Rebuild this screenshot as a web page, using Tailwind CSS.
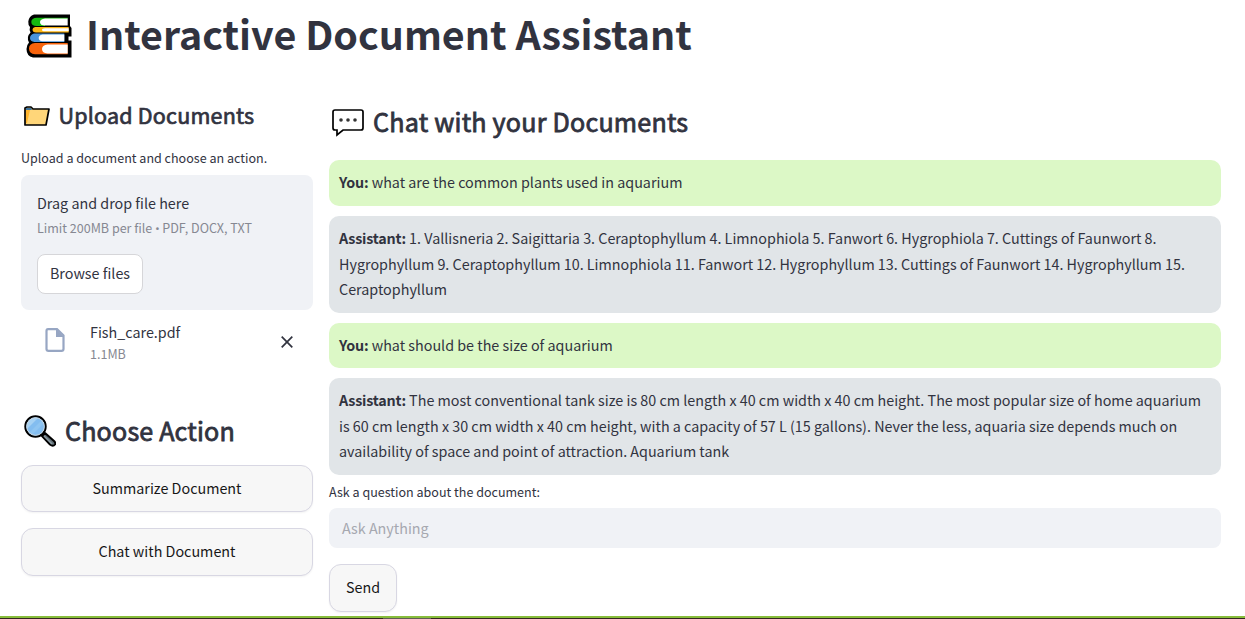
<!DOCTYPE html>
<html lang="en">
<head>
<meta charset="utf-8">
<title>Interactive Document Assistant</title>
<script src="https://cdn.jsdelivr.net/npm/@tailwindcss/browser@4"></script>
</head>
<body class="relative h-[619px] overflow-hidden bg-white pl-[21px] pr-6 font-['Source_Sans_Pro','Noto_Sans_CJK_SC',sans-serif] text-[14.33px] leading-[25.6px] text-[#31333f]">
<h1 class="flex h-[72px] items-center pl-1 text-[39.4px] font-bold leading-[72px]">
  <svg class="mr-[13px] h-12 w-12 shrink-0" viewBox="0 0 48 48">
    <path d="M9 2.500H45V14L46.500 16V24.500H43.500V28.500H46.500V45.500H8Q1.500 44 1.500 37Q1.500 33 4 30.500Q1 25 5.500 20.500Q4 18 5 15Q3 13 3.300 9.500Q4 4 9 2.500Z" fill="#000"/>
    <path d="M42.700 5.800H12Q6.300 6 6.300 10Q6.300 14 12 14H20V7H42.700Z" fill="#16b910"/>
    <path d="M42.700 6.500H20Q15 7 15 10Q15 13.500 20 13.500H42.700Z" fill="#fff"/>
    <path d="M43.700 15H10Q7.500 15.500 7.500 17.800Q7.500 20.300 11 20.500H43.700Z" fill="#fcb514"/>
    <path d="M43.700 16.200H20Q17 16.200 17 17.800Q17 19.300 20 19.300H43.700Z" fill="#fff"/>
    <path d="M39.300 21.500H9Q5 22.500 5 26Q5 29.500 9.500 30H39.300Z" fill="#4a94db"/>
    <path d="M39.300 22.500H17.500Q13.700 23 13.700 26Q13.700 29 17.500 29.300H39.300Z" fill="#fff"/>
    <path d="M42.700 31H10Q4 31.500 4 36.500Q4 41.500 10 42.300H42.700Z" fill="#f7630c"/>
    <path d="M42.700 32.500H22.500Q17 33.200 17 37Q17 41 22.500 41.500H42.700Z" fill="#fff"/>
  </svg>
  <span class="-mt-[7px]">Interactive Document Assistant</span>
</h1>
<main class="flex gap-4">
  <aside class="w-[292px] shrink-0">
    <h3 class="mt-6 flex h-10 items-center pl-[3px] text-[21.5px] font-normal tracking-[0.2px] [-webkit-text-stroke:0.7px_#31333f]">
      <svg class="mr-[8.5px] h-[22px] w-[26px] shrink-0" viewBox="0 0 26 22">
        <path d="M1 20V3L3 2H7L9 4H25L22 20Z" fill="#ffd679" stroke="#000" stroke-width="1.7" stroke-linejoin="round"/>
        <path d="M2 3H7L8 5H2Z" fill="#40749d"/>
        <path d="M2 5H6L3 18H2Z" fill="#ffb52e"/>
      </svg>
      <span class="-mt-[2px]">Upload Documents</span>
    </h3>
    <p class="mt-[11px] h-7 text-[12.54px] leading-[22px]">Upload a document and choose an action.</p>
    <section class="h-[135px] rounded-lg bg-[#f0f2f6] px-4 pt-4">
      <div class="leading-6">Drag and drop file here</div>
      <div class="text-[12.54px] leading-[25px] text-[#868892]">Limit 200MB per file <span class="font-['Noto_Sans'] text-[11.5px] leading-none">•</span> PDF, DOCX, TXT</div>
      <button class="mt-[14px] h-10 w-[106px] rounded-lg border border-[#d6d6d9] bg-white pb-[2px] leading-6">Browse files</button>
    </section>
    <div class="flex h-[61px] items-start pl-6">
      <svg class="mt-[18px] h-6 w-5 shrink-0" viewBox="0 0 20 24"><path d="M3 1.200H12L18.500 7.500V21Q18.500 22.800 16.500 22.800H3.500Q1.500 22.800 1.500 21V3Q1.500 1.200 3 1.200Z" fill="none" stroke="#97a6c3" stroke-width="2.200"/><path d="M11 1L19 9H11Z" fill="#97a6c3"/></svg>
      <div class="ml-[25px] mt-[10px] w-[191px] shrink-0">
        <div class="leading-6">Fish_care.pdf</div>
        <div class="text-[12.54px] leading-5 text-[#868892]">1.1MB</div>
      </div>
      <svg class="mt-[26px] h-3 w-3 shrink-0" viewBox="0 0 12 12"><path d="M.7 .7L11.3 11.3M11.3 .7L.7 11.3" stroke="#31333f" stroke-width="1.7"/></svg>
    </div>
    <h2 class="mt-[38px] flex h-[44px] items-center pl-[3px] text-[25.1px] font-normal tracking-[0.18px] [-webkit-text-stroke:0.8px_#31333f]">
      <svg class="mr-[9px] h-8 w-8 shrink-0" viewBox="0 0 32 32">
        <path d="M18 21L26 29.500Q29 32 31 29.500Q32 28 30 26L21 18Z" fill="#627178" stroke="#000" stroke-width="2" stroke-linejoin="round"/>
        <path d="M20 21L28 29" stroke="#8b9ba3" stroke-width="1.5"/>
        <circle cx="11.5" cy="11.5" r="10.2" fill="#83bdf0" stroke="#000" stroke-width="2"/>
        <path d="M3 14A9 9 0 0 1 14 3Z" fill="#a7d2f4"/><path d="M5 18L18 5L20 8L8 20Z" fill="#8fc5f2"/>
        <circle cx="11.5" cy="11.5" r="8.8" fill="none" stroke="#c9d6df"/>
      </svg>
      <span>Choose Action</span>
    </h2>
    <button class="mt-[12px] block h-[47px] w-full rounded-xl border border-[#d8d7e3] bg-[#f7f7f7] pb-[2px] text-[#171717] shadow-xs">Summarize Document</button>
    <button class="mt-4 block h-12 w-full rounded-xl border border-[#d8d7e3] bg-[#f7f7f7] pb-[2px] text-[#171717] shadow-xs">Chat with Document</button>
  </aside>
  <section class="w-[892px] shrink-0">
    <h2 class="mt-[30px] flex h-10 items-center pl-[3px] text-[25.1px] font-normal tracking-[0.22px] [-webkit-text-stroke:0.8px_#31333f]">
      <svg class="mr-[9px] mt-[2px] h-7 w-8 shrink-0" viewBox="0 0 32 28">
        <path d="M3 1H29Q31 1 31 3V19Q31 21 29 21H11L5 26V21H3Q1 21 1 19V3Q1 1 3 1Z" fill="#fff" stroke="#000" stroke-width="1.7"/>
        <g fill="#333"><circle cx="9" cy="11" r="1.8"/><circle cx="16" cy="11" r="1.8"/><circle cx="23" cy="11" r="1.8"/></g>
      </svg>
      <span>Chat with your Documents</span>
    </h2>
    <div class="mt-[18.2px] flex flex-col gap-[10px]">
      <div class="rounded-[10px] bg-[#dcf8c6] px-[10px] pb-[11.2px] pt-[8.8px]"><b class="font-bold tracking-[-0.2px]">You:</b> what are the common plants used in aquarium</div>
      <div class="rounded-[10px] bg-[#e1e5e8] px-[10px] pb-[10.6px] pt-[9.4px]"><b class="font-bold tracking-[-0.2px]">Assistant:</b> 1. Vallisneria 2. Saigittaria 3. Ceraptophyllum 4. Limnophiola 5. Fanwort 6. Hygrophiola 7. Cuttings of Faunwort 8.<br>Hygrophyllum 9. Ceraptophyllum 10. Limnophiola 11. Fanwort 12. Hygrophyllum 13. Cuttings of Faunwort 14. Hygrophyllum 15.<br>Ceraptophyllum</div>
      <div class="rounded-[10px] bg-[#dcf8c6] px-[10px] pb-[10.6px] pt-[9.4px]"><b class="font-bold tracking-[-0.2px]">You:</b> what should be the size of aquarium</div>
      <div class="rounded-[10px] bg-[#e1e5e8] px-[10px] pb-[10.9px] pt-[9.1px]"><b class="font-bold tracking-[-0.2px]">Assistant:</b> The most conventional tank size is 80 cm length x 40 cm width x 40 cm height. The most popular size of home aquarium<br>is 60 cm length x 30 cm width x 40 cm height, with a capacity of 57 L (15 gallons). Never the less, aquaria size depends much on<br>availability of space and point of attraction. Aquarium tank</div>
    </div>
    <label class="mt-[6px] block h-[27px] text-[12.54px] leading-[22px]">Ask a question about the document:</label>
    <div class="h-10 rounded-lg bg-[#f0f2f6] px-[13px] leading-10 text-[#a6a8b0]">Ask Anything</div>
    <button class="mt-4 block h-12 w-[68px] rounded-xl border border-[#d8d7e3] bg-[#f7f7f7] pb-[2px] text-[#171717] shadow-xs">Send</button>
  </section>
</main>
<div class="absolute inset-x-0 bottom-0 h-[3px] border-t-2 border-[#87bd3b] bg-[#34251f]"><div class="ml-[383px] h-px w-[48px] bg-[#625c55]"></div></div>
</body>
</html>
